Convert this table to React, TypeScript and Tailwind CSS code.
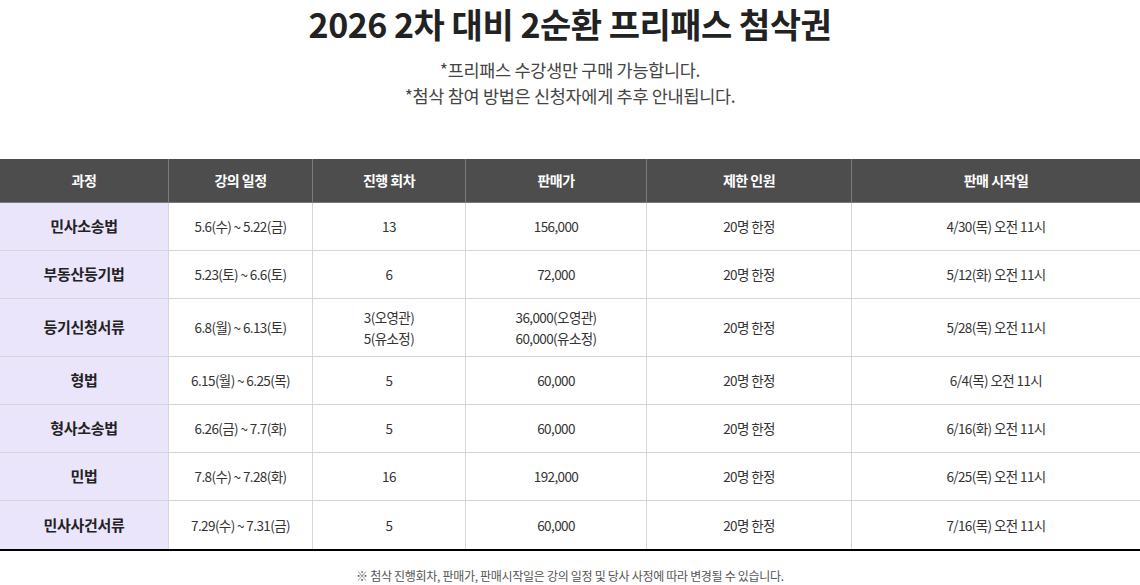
const rows = [
  { name: "민사소송법", date: "5.6(수) ~ 5.22(금)", count: ["13"], price: ["156,000"], start: "4/30(목) 오전 11시" },
  { name: "부동산등기법", date: "5.23(토) ~ 6.6(토)", count: ["6"], price: ["72,000"], start: "5/12(화) 오전 11시" },
  { name: "등기신청서류", date: "6.8(월) ~ 6.13(토)", count: ["3(오영관)", "5(유소정)"], price: ["36,000(오영관)", "60,000(유소정)"], start: "5/28(목) 오전 11시", tall: true },
  { name: "형법", date: "6.15(월) ~ 6.25(목)", count: ["5"], price: ["60,000"], start: "6/4(목) 오전 11시" },
  { name: "형사소송법", date: "6.26(금) ~ 7.7(화)", count: ["5"], price: ["60,000"], start: "6/16(화) 오전 11시" },
  { name: "민법", date: "7.8(수) ~ 7.28(화)", count: ["16"], price: ["192,000"], start: "6/25(목) 오전 11시" },
  { name: "민사사건서류", date: "7.29(수) ~ 7.31(금)", count: ["5"], price: ["60,000"], start: "7/16(목) 오전 11시" },
];

const cols = ["w-[169px]", "w-[144px]", "w-[153px]", "w-[181px]", "w-[205px]", "flex-1"];
const heads = ["과정", "강의 일정", "진행 회차", "판매가", "제한 인원", "판매 시작일"];

export default function App() {
  return (
    <div className="w-[1140px] bg-white text-[#333]" style={{ fontFamily: '"Noto Sans CJK KR", "Noto Sans", sans-serif' }}>
      <div className="flex flex-col items-center">
        <h1 className="mt-[1px] text-[34px] font-bold leading-[46px] tracking-[-0.5px] text-[#222]">2026 2차 대비 2순환 프리패스 첨삭권</h1>
        <p className="mt-[10px] text-[17.5px] leading-[26px] text-[#444] tracking-[-0.3px]">*프리패스 수강생만 구매 가능합니다.</p>
        <p className="text-[17.5px] leading-[26px] text-[#444] tracking-[-0.3px]">*첨삭 참여 방법은 신청자에게 추후 안내됩니다.</p>
      </div>

      <div className="mt-[50px] border-b-2 border-black">
        <div className="flex h-[44px] bg-[#4d4d4d] border-b border-[#7a7a7a] text-white text-[14px] font-bold tracking-[-0.5px]">
          {heads.map((h, i) => (
            <div key={h} className={`${cols[i]} flex items-center justify-center ${i < 5 ? "border-r border-[#7a7a7a]" : ""}`}>{h}</div>
          ))}
        </div>
        {rows.map((r, ri) => (
          <div key={r.name} className={`flex ${r.tall ? "h-[58px]" : "h-[48px]"} ${ri < rows.length - 1 ? "border-b border-[#d6d6d6]" : ""} text-[13.5px] tracking-[-0.6px] text-[#333]`}>
            <div className={`${cols[0]} flex items-center justify-center bg-[#ebe5fc] border-r border-[#d6d6d6] text-[15px] font-bold text-[#222] tracking-[-0.3px]`}>{r.name}</div>
            <div className={`${cols[1]} flex items-center justify-center border-r border-[#d6d6d6]`}>{r.date}</div>
            <div className={`${cols[2]} flex flex-col items-center justify-center border-r border-[#d6d6d6] leading-[21px]`}>
              {r.count.map((c) => <span key={c}>{c}</span>)}
            </div>
            <div className={`${cols[3]} flex flex-col items-center justify-center border-r border-[#d6d6d6] leading-[21px]`}>
              {r.price.map((c) => <span key={c}>{c}</span>)}
            </div>
            <div className={`${cols[4]} flex items-center justify-center border-r border-[#d6d6d6]`}>20명 한정</div>
            <div className={`${cols[5]} flex items-center justify-center`}>{r.start}</div>
          </div>
        ))}
      </div>

      <p className="mt-[16px] text-center text-[12px] text-[#555] tracking-[-0.3px]">※ 첨삭 진행회차, 판매가, 판매시작일은 강의 일정 및 당사 사정에 따라 변경될 수 있습니다.</p>
    </div>
  );
}
